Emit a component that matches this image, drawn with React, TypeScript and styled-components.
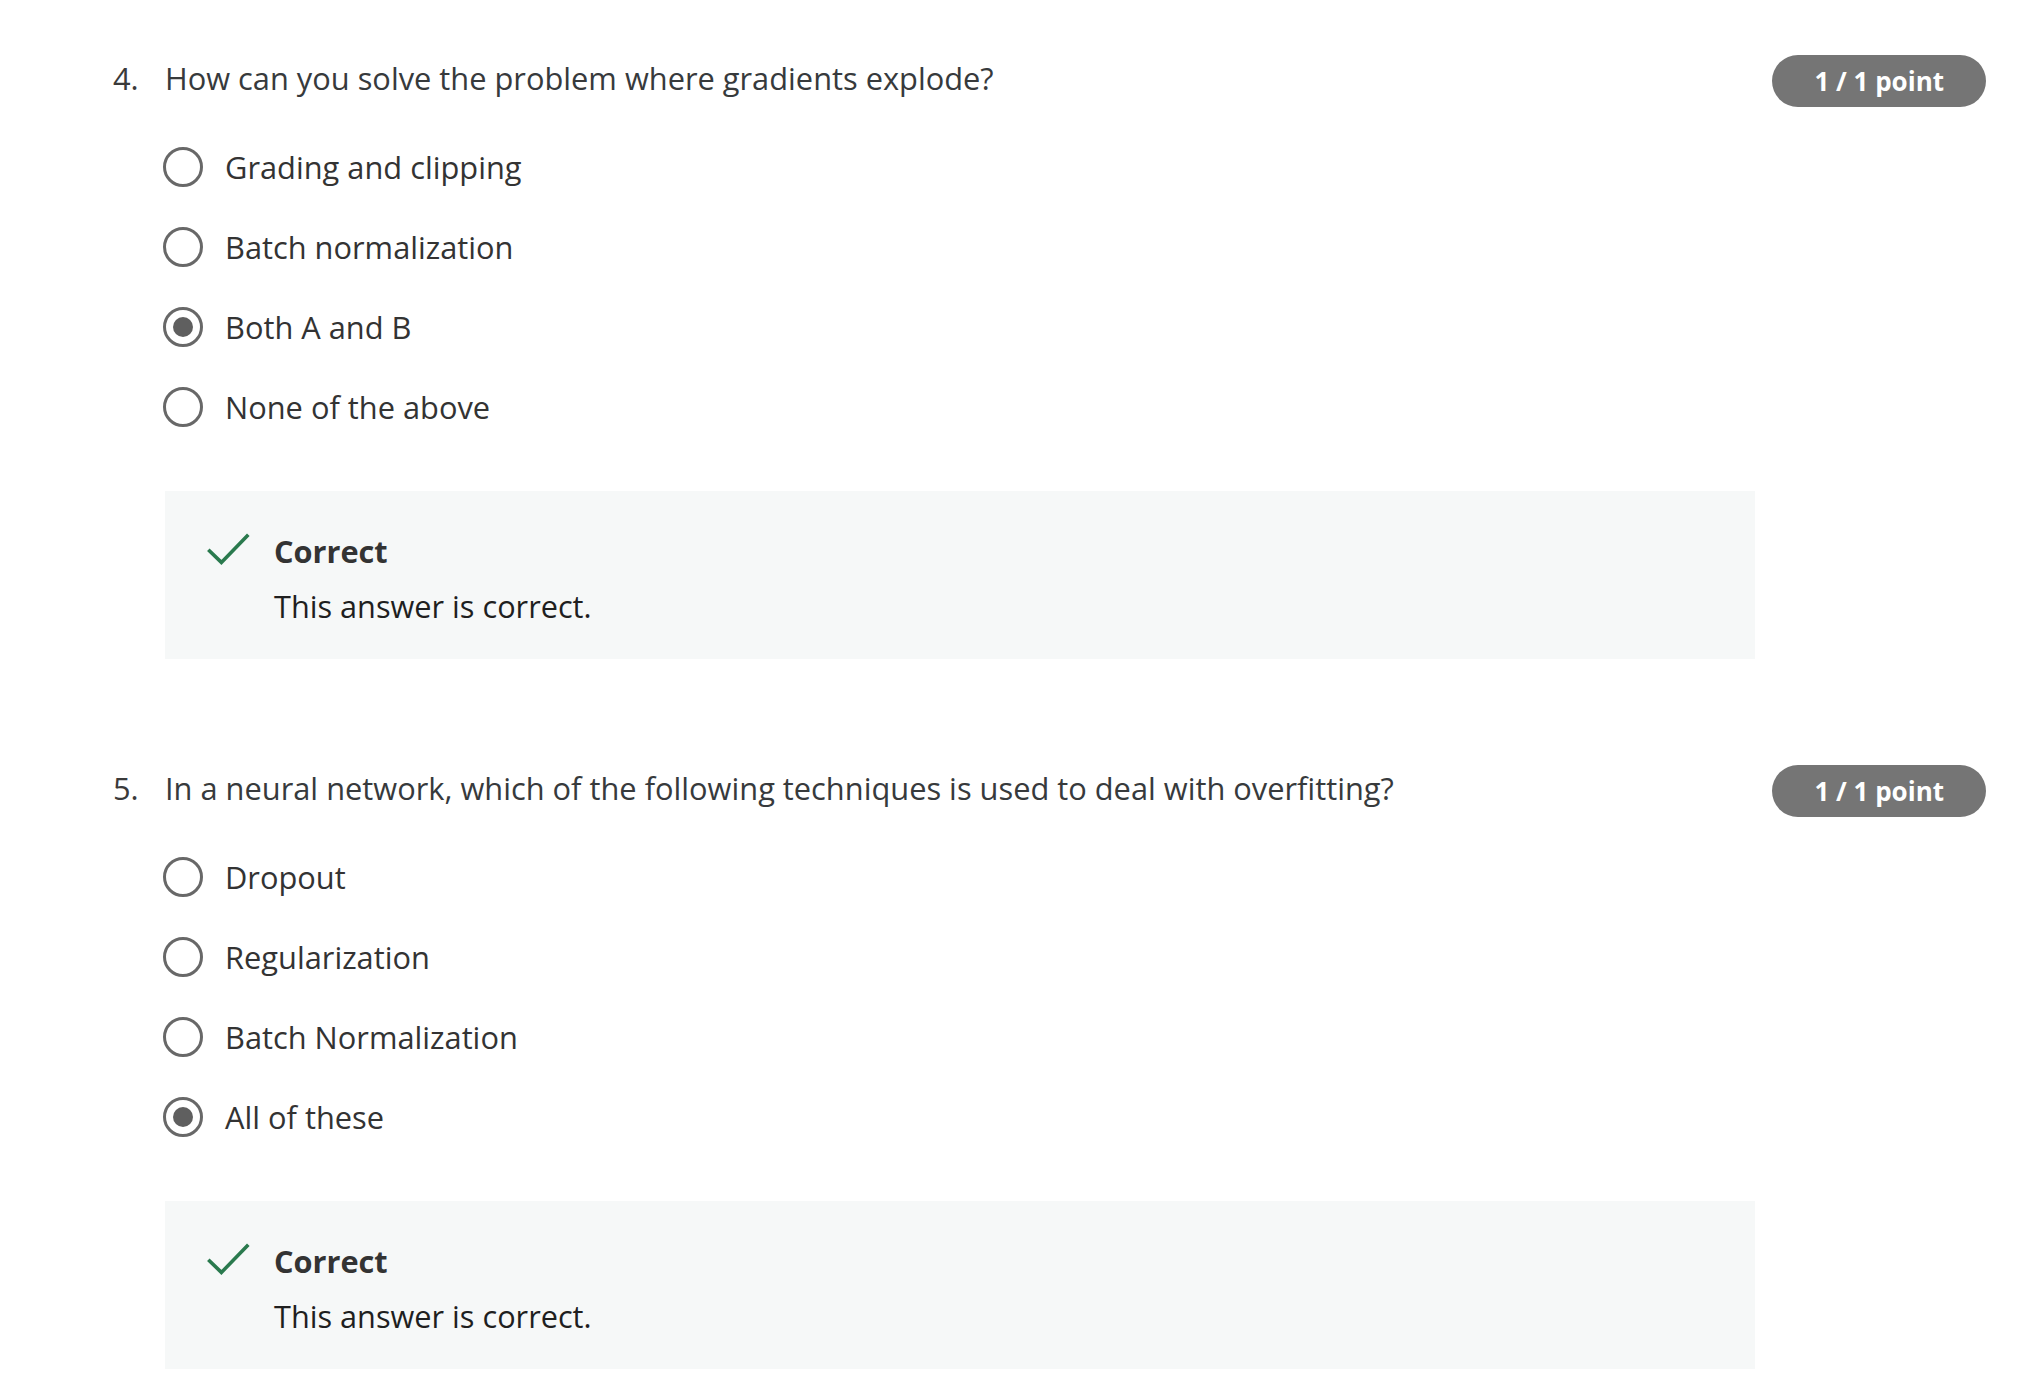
import styled, { createGlobalStyle } from 'styled-components';

const GlobalStyle = createGlobalStyle`
  html, body {
    margin: 0;
    padding: 0;
    background: #ffffff;
  }
  body {
    font-family: "Open Sans", "Noto Sans", "Liberation Sans", sans-serif;
    color: #333333;
    -webkit-font-smoothing: antialiased;
  }
`;

type Question = {
  number: number;
  text: string;
  options: string[];
  selected: number;
};

const questions: Question[] = [
  {
    number: 4,
    text: 'How can you solve the problem where gradients explode?',
    options: ['Grading and clipping', 'Batch normalization', 'Both A and B', 'None of the above'],
    selected: 2,
  },
  {
    number: 5,
    text: 'In a neural network, which of the following techniques is used to deal with overfitting?',
    options: ['Dropout', 'Regularization', 'Batch Normalization', 'All of these'],
    selected: 3,
  },
];

function CheckIcon() {
  return (
    <svg width="44" height="34" viewBox="0 0 44 34" fill="none">
      <polyline
        points="2.3,17.8 15.4,30.4 42.3,2.7"
        stroke="#2a7a4e"
        strokeWidth="3.6"
        strokeLinecap="butt"
        strokeLinejoin="miter"
        fill="none"
      />
    </svg>
  );
}

export default function App() {
  return (
    <>
      <GlobalStyle />
      <Page>
        {questions.map((q) => (
          <QuestionBlock key={q.number}>
            <Header>
              <Number>{q.number}.</Number>
              <Prompt>{q.text}</Prompt>
              <Badge>1 / 1 point</Badge>
            </Header>
            <Options>
              {q.options.map((opt, i) => (
                <Option key={opt}>
                  <Radio $checked={i === q.selected} />
                  <OptionLabel>{opt}</OptionLabel>
                </Option>
              ))}
            </Options>
            <Feedback>
              <IconCell>
                <CheckIcon />
              </IconCell>
              <FeedbackBody>
                <FeedbackTitle>Correct</FeedbackTitle>
                <FeedbackText>This answer is correct.</FeedbackText>
              </FeedbackBody>
            </Feedback>
          </QuestionBlock>
        ))}
      </Page>
    </>
  );
}

const Page = styled.div`
  padding: 55px 36px 0 113px;
  display: flex;
  flex-direction: column;
  gap: 106px;
`;

const QuestionBlock = styled.section`
  display: flex;
  flex-direction: column;
`;

const Header = styled.div`
  display: flex;
  align-items: flex-start;
`;

const Number = styled.span`
  width: 52px;
  flex-shrink: 0;
  font-size: 30.8px;
  line-height: 45px;
  margin-top: 1px;
  color: #3a3a3a;
`;

const Prompt = styled.div`
  flex: 1;
  font-size: 30.8px;
  line-height: 45px;
  margin-top: 1px;
  color: #373a3c;
`;

const Badge = styled.div`
  flex-shrink: 0;
  height: 52px;
  padding: 0 42px;
  border-radius: 26px;
  background: #757575;
  color: #ffffff;
  font-size: 26px;
  font-weight: 700;
  line-height: 52px;
  white-space: nowrap;
`;

const Options = styled.div`
  display: flex;
  flex-direction: column;
  margin-top: 20px;
  padding-left: 50px;
`;

const Option = styled.label`
  display: flex;
  align-items: center;
  height: 80px;
`;

const Radio = styled.span<{ $checked: boolean }>`
  box-sizing: border-box;
  width: 40px;
  height: 40px;
  border-radius: 50%;
  border: 3.5px solid #686868;
  display: flex;
  align-items: center;
  justify-content: center;
  flex-shrink: 0;

  &::after {
    content: '';
    width: 20px;
    height: 20px;
    border-radius: 50%;
    background: #5f5f5f;
    display: ${(p) => (p.$checked ? 'block' : 'none')};
  }
`;

const OptionLabel = styled.span`
  margin-left: 22px;
  font-size: 30.8px;
  line-height: 45px;
  color: #333333;
`;

const Feedback = styled.div`
  margin-top: 44px;
  margin-left: 52px;
  width: 1590px;
  box-sizing: border-box;
  height: 168px;
  background: #f6f8f8;
  padding: 38px 0 0 41px;
  display: flex;
  align-items: flex-start;
`;

const IconCell = styled.div`
  width: 68px;
  padding-top: 3px;
  flex-shrink: 0;
`;

const FeedbackBody = styled.div`
  display: flex;
  flex-direction: column;
  gap: 10px;
`;

const FeedbackTitle = styled.div`
  font-size: 30.7px;
  font-weight: 700;
  line-height: 45px;
  color: #333333;
`;

const FeedbackText = styled.div`
  font-size: 30.7px;
  line-height: 45px;
  color: #1f1f1f;
`;
